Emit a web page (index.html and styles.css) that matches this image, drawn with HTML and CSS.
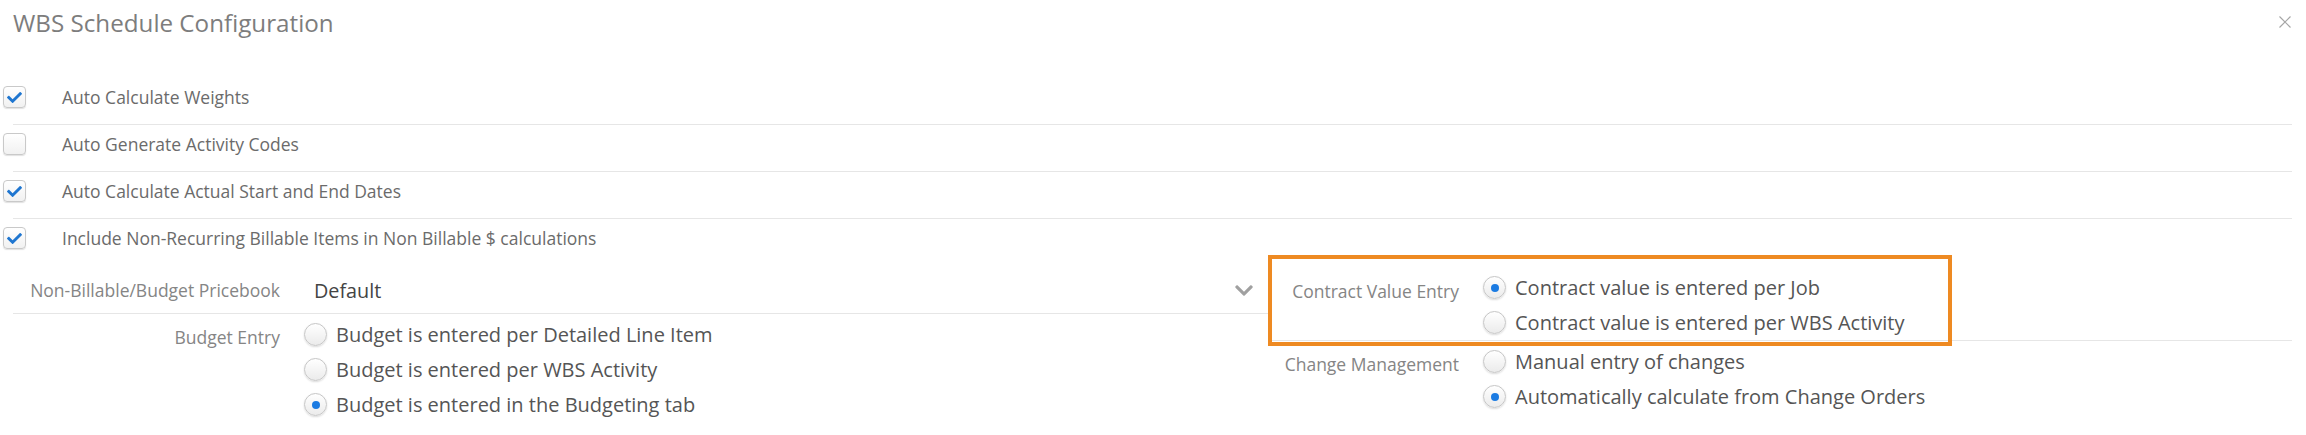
FILE: index.html
```html
<!DOCTYPE html>
<html lang="en">
<head>
<meta charset="utf-8">
<title>WBS Schedule Configuration</title>
<link rel="stylesheet" href="styles.css">
</head>
<body>
<div class="dialog">
  <header class="dlg-head">
    <h1 class="dlg-title">WBS Schedule Configuration</h1>
    <button class="dlg-close" type="button" aria-label="Close">
      <svg viewBox="0 0 12 12" width="12" height="12"><path d="M0.5 0.5 L11.5 11.5 M11.5 0.5 L0.5 11.5" stroke="#a6a6a6" stroke-width="1.2" fill="none"/></svg>
    </button>
  </header>

  <div class="checks">
    <div class="check-row">
      <span class="cb"><svg class="cb-mark" viewBox="0 0 512 512"><path d="M173.898 439.404l-166.4-166.4c-9.997-9.997-9.997-26.206 0-36.204l36.203-36.204c9.997-9.998 26.207-9.998 36.204 0L192 312.69 432.095 72.596c9.997-9.997 26.207-9.997 36.204 0l36.203 36.204c9.997 9.997 9.997 26.206 0 36.204l-294.4 294.401c-9.998 9.997-26.207 9.997-36.204-.001z"/></svg></span>
      <span class="check-label">Auto Calculate Weights</span>
    </div>
    <div class="check-row">
      <span class="cb"></span>
      <span class="check-label">Auto Generate Activity Codes</span>
    </div>
    <div class="check-row">
      <span class="cb"><svg class="cb-mark" viewBox="0 0 512 512"><path d="M173.898 439.404l-166.4-166.4c-9.997-9.997-9.997-26.206 0-36.204l36.203-36.204c9.997-9.998 26.207-9.998 36.204 0L192 312.69 432.095 72.596c9.997-9.997 26.207-9.997 36.204 0l36.203 36.204c9.997 9.997 9.997 26.206 0 36.204l-294.4 294.401c-9.998 9.997-26.207 9.997-36.204-.001z"/></svg></span>
      <span class="check-label">Auto Calculate Actual Start and End Dates</span>
    </div>
    <div class="check-row">
      <span class="cb"><svg class="cb-mark" viewBox="0 0 512 512"><path d="M173.898 439.404l-166.4-166.4c-9.997-9.997-9.997-26.206 0-36.204l36.203-36.204c9.997-9.998 26.207-9.998 36.204 0L192 312.69 432.095 72.596c9.997-9.997 26.207-9.997 36.204 0l36.203 36.204c9.997 9.997 9.997 26.206 0 36.204l-294.4 294.401c-9.998 9.997-26.207 9.997-36.204-.001z"/></svg></span>
      <span class="check-label">Include Non-Recurring Billable Items in Non Billable $ calculations</span>
    </div>
  </div>

  <div class="cols">
    <div class="col col-left">
      <div class="field field-select">
        <div class="field-label">Non-Billable/Budget Pricebook</div>
        <div class="select">
          <span class="select-value">Default</span>
          <svg class="chev" viewBox="0 0 448 512"><path d="M207.029 381.476L12.686 187.132c-9.373-9.373-9.373-24.569 0-33.941l22.667-22.667c9.357-9.357 24.522-9.375 33.901-.04L224 284.505l154.745-154.021c9.379-9.335 24.544-9.317 33.901.04l22.667 22.667c9.373 9.373 9.373 24.569 0 33.941L240.971 381.476c-9.373 9.372-24.569 9.372-33.942 0z"/></svg>
        </div>
      </div>
      <div class="field field-radios last">
        <div class="field-label">Budget Entry</div>
        <div class="radios">
          <label class="radio-item"><span class="radio"></span><span class="radio-text">Budget is entered per Detailed Line Item</span></label>
          <label class="radio-item"><span class="radio"></span><span class="radio-text">Budget is entered per WBS Activity</span></label>
          <label class="radio-item"><span class="radio on"></span><span class="radio-text">Budget is entered in the Budgeting tab</span></label>
        </div>
      </div>
    </div>

    <div class="col col-right">
      <div class="field field-radios first">
        <div class="field-label">Contract Value Entry</div>
        <div class="radios">
          <label class="radio-item"><span class="radio on"></span><span class="radio-text">Contract value is entered per Job</span></label>
          <label class="radio-item"><span class="radio"></span><span class="radio-text">Contract value is entered per WBS Activity</span></label>
        </div>
        <div class="highlight"></div>
      </div>
      <div class="field field-radios last">
        <div class="field-label">Change Management</div>
        <div class="radios">
          <label class="radio-item"><span class="radio"></span><span class="radio-text">Manual entry of changes</span></label>
          <label class="radio-item"><span class="radio on"></span><span class="radio-text">Automatically calculate from Change Orders</span></label>
        </div>
      </div>
    </div>
  </div>
</div>
</body>
</html>
```

FILE: styles.css
```css
html, body {
  margin: 0;
  padding: 0;
  background: #ffffff;
}

body {
  font-family: "Open Sans", "Liberation Sans", sans-serif;
}

.dialog {
  width: 2306px;
  box-sizing: border-box;
  padding: 0 14px 0 13px;
}

.dlg-head {
  display: flex;
  justify-content: space-between;
  align-items: flex-start;
  box-sizing: border-box;
  height: 78px;
  padding-top: 7px;
}

.dlg-title {
  margin: 0;
  font-size: 24.2px;
  line-height: 32px;
  font-weight: 400;
  color: #7d7d7d;
}

.dlg-close {
  margin: 9px 1px 0 0;
  padding: 0;
  border: 0;
  background: none;
  width: 12px;
  height: 12px;
  display: flex;
}

.check-row {
  display: flex;
  align-items: center;
  padding: 7px 0 15px;
  border-bottom: 1px solid #e6e6e6;
}

.check-row:last-child {
  border-bottom: 0;
}

.cb {
  flex: none;
  width: 23px;
  height: 22px;
  box-sizing: border-box;
  margin-left: -10px;
  margin-right: 36px;
  border: 1px solid #c9c9c9;
  border-radius: 4px;
  background: linear-gradient(#ffffff, #f1f1f1);
  box-shadow: 0 1px 1px rgba(0, 0, 0, 0.12);
  display: flex;
  align-items: center;
  justify-content: center;
}

.cb-mark {
  width: 15px;
  height: 15px;
  fill: #1f76d0;
}

.check-label {
  font-size: 17.5px;
  line-height: 24px;
  color: #6b6b6b;
}

.cols {
  display: flex;
}

.col-left {
  width: 1255px;
  flex: none;
}

.col-right {
  flex: 1;
}

.field {
  display: flex;
  align-items: flex-start;
  border-bottom: 1px solid #e6e6e6;
  position: relative;
}

.field.last {
  border-bottom: 0;
}

.field-label {
  flex: none;
  box-sizing: border-box;
  text-align: right;
  margin-right: 24px;
  font-size: 17.5px;
  color: #858585;
  white-space: nowrap;
}

.col-left .field-label {
  width: 267px;
}

.col-right .field-label {
  width: 191px;
}

.field-select {
  padding: 7px 0 5px;
}

.field-select .field-label {
  line-height: 36px;
}

.select {
  flex: 1;
  height: 36px;
  display: flex;
  align-items: center;
  justify-content: space-between;
  padding: 0 15px 0 10px;
}

.select-value {
  font-size: 19.8px;
  color: #444444;
}

.chev {
  width: 18px;
  height: 21px;
  fill: #a0a0a0;
}

.field-radios {
  padding-top: 3px;
}

.field-radios .field-label {
  line-height: 35px;
  padding-top: 3px;
}

.field-radios.first {
  padding-top: 5px;
}

.field-radios.first .field-label {
  padding-top: 4px;
}

.radios {
  display: flex;
  flex-direction: column;
}

.radio-item {
  display: flex;
  align-items: center;
  height: 35px;
}

.radio {
  flex: none;
  width: 23px;
  height: 23px;
  box-sizing: border-box;
  margin-right: 9px;
  border: 1px solid #c6c6c6;
  border-radius: 50%;
  background: linear-gradient(#ffffff, #ebebeb);
  box-shadow: 0 1px 2px rgba(0, 0, 0, 0.14);
  display: flex;
  align-items: center;
  justify-content: center;
}

.radio.on::after {
  content: "";
  width: 8px;
  height: 8px;
  border-radius: 50%;
  background: #1b7be2;
}

.radio-text {
  font-size: 20px;
  color: #555555;
  white-space: nowrap;
}

.highlight {
  position: absolute;
  top: -10px;
  left: 0;
  width: 684px;
  height: 91px;
  box-sizing: border-box;
  border: 4px solid #ee8a22;
  pointer-events: none;
}
```
